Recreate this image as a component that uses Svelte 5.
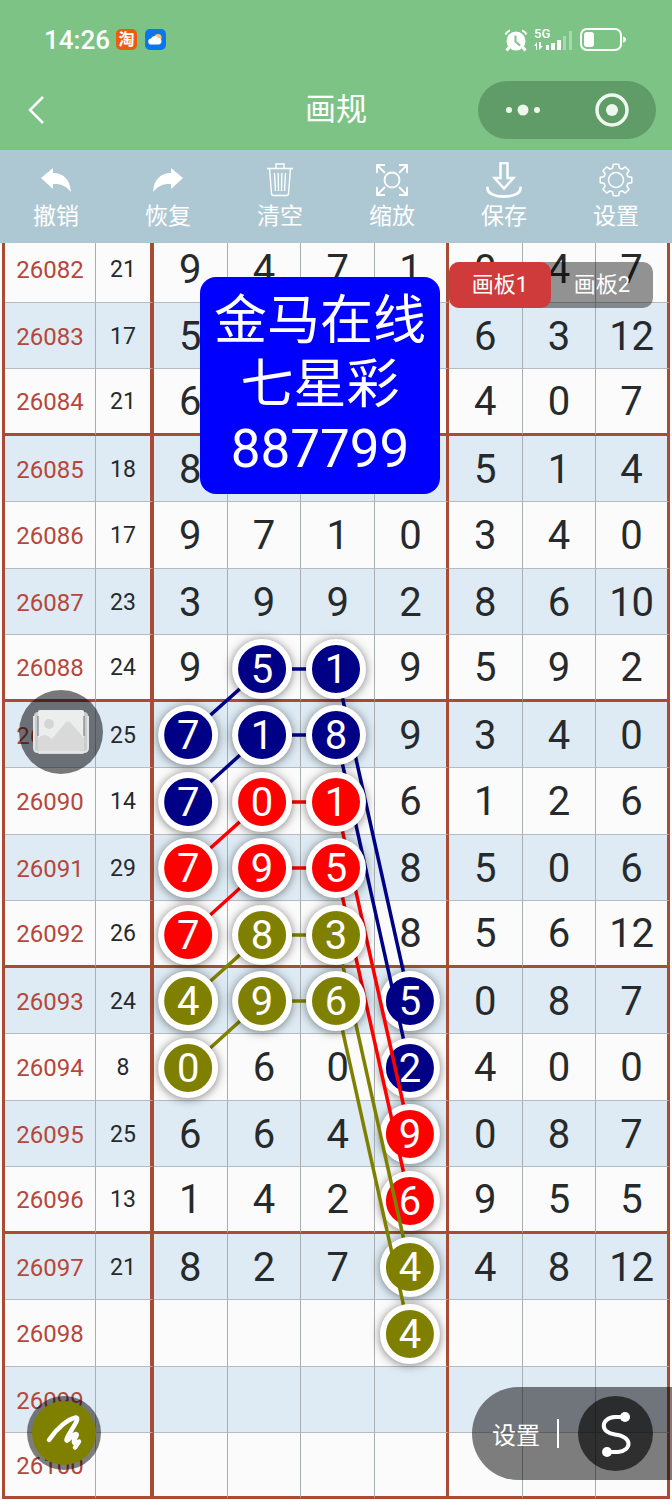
<script>
    const rows = [
        { id: '26082', sum: 21, nums: ['9', '4', '7', '1', '0', '4', '7'] },
        { id: '26083', sum: 17, nums: ['5', '', '', '', '6', '3', '12'] },
        { id: '26084', sum: 21, nums: ['6', '', '', '', '4', '0', '7'] },
        { id: '26085', sum: 18, nums: ['8', '', '', '', '5', '1', '4'] },
        { id: '26086', sum: 17, nums: ['9', '7', '1', '0', '3', '4', '0'] },
        { id: '26087', sum: 23, nums: ['3', '9', '9', '2', '8', '6', '10'] },
        { id: '26088', sum: 24, nums: ['9', '', '', '9', '5', '9', '2'] },
        { id: '26089', sum: 25, nums: ['', '', '', '9', '3', '4', '0'] },
        { id: '26090', sum: 14, nums: ['', '', '', '6', '1', '2', '6'] },
        { id: '26091', sum: 29, nums: ['', '', '', '8', '5', '0', '6'] },
        { id: '26092', sum: 26, nums: ['', '', '', '8', '5', '6', '12'] },
        { id: '26093', sum: 24, nums: ['', '', '', '', '0', '8', '7'] },
        { id: '26094', sum: 8, nums: ['', '6', '0', '', '4', '0', '0'] },
        { id: '26095', sum: 25, nums: ['6', '6', '4', '', '0', '8', '7'] },
        { id: '26096', sum: 13, nums: ['1', '4', '2', '', '9', '5', '5'] },
        { id: '26097', sum: 21, nums: ['8', '2', '7', '', '4', '8', '12'] },
        { id: '26098', sum: '', nums: ['', '', '', '', '', '', ''] },
        { id: '26099', sum: '', nums: ['', '', '', '', '', '', ''] },
        { id: '26100', sum: '', nums: ['', '', '', '', '', '', ''] }
    ];

    // each path: colour + four balls [column, row, digit], later paths lie on top
    const paths = [
        { color: '#000086', balls: [[0, 7, 7], [1, 6, 5], [2, 6, 1], [3, 11, 5]] },
        { color: '#000086', balls: [[0, 8, 7], [1, 7, 1], [2, 7, 8], [3, 12, 2]] },
        { color: '#fe0000', balls: [[0, 9, 7], [1, 8, 0], [2, 8, 1], [3, 13, 9]] },
        { color: '#fe0000', balls: [[0, 10, 7], [1, 9, 9], [2, 9, 5], [3, 14, 6]] },
        { color: '#808000', balls: [[0, 11, 4], [1, 10, 8], [2, 10, 3], [3, 15, 4]] },
        { color: '#808000', balls: [[0, 12, 0], [1, 11, 9], [2, 11, 6], [3, 16, 4]] }
    ];

    const px = col => `${28 + col * 11}%`;
    const py = row => Math.floor(27 + (row * 133) / 2);

    let board = $state(1);

    function gearPath(teeth, outer, inner) {
        const pts = [];
        const step = (Math.PI * 2) / teeth;
        for (let i = 0; i < teeth; i++) {
            const a = i * step - Math.PI / 2;
            for (const [r, d] of [[inner, -0.27], [outer, -0.17], [outer, 0.17], [inner, 0.27]]) {
                pts.push(`${(18 + r * Math.cos(a + d)).toFixed(2)} ${(18 + r * Math.sin(a + d)).toFixed(2)}`);
            }
        }
        return 'M' + pts.join('L') + 'Z';
    }
</script>

<div class="app">
    <header>
        <div class="status">
            <span class="clock">14:26</span>
            <span class="taobao">淘</span>
            <svg class="weather" width="21" height="21" viewBox="0 0 21 21">
                <rect width="21" height="21" rx="5" fill="#0b76ea" />
                <circle cx="13" cy="8.5" r="3.6" fill="#ffc46b" />
                <path d="M6.5 15.5a3 3 0 0 1-.4-6 4 4 0 0 1 7.2-.6 3.4 3.4 0 0 1 .9 6.6z" fill="#fff" />
            </svg>
            <span class="grow"></span>
            <svg width="24" height="24" viewBox="0 0 24 24">
                <circle cx="12" cy="13" r="9.5" fill="#fff" />
                <path d="M1.500 6.500A7 7 0 0 1 6 2.500M22.500 6.500A7 7 0 0 0 18 2.500" stroke="#fff" stroke-width="2" fill="none" />
                <path d="M5.500 19L2.500 22.500M18.500 19l3 3.500" stroke="#fff" stroke-width="3" />
                <path d="M11.500 7.500v6l4.500 4" stroke="#7cc385" stroke-width="2" fill="none" />
            </svg>
            <span class="signal">
                <span>5G</span>
                <svg width="40" height="22" viewBox="0 0 40 22" fill="#fff">
                    <path d="M0 17l3-4v8H2v-4zM5 13v8l4-4H7v-4z" />
                    <rect x="12" y="16" width="3" height="5" />
                    <rect x="17" y="14" width="4" height="7" />
                    <rect x="23" y="11" width="4" height="10" />
                    <rect x="29" y="7" width="3" height="14" opacity=".35" />
                    <rect x="35" y="2" width="3" height="19" opacity=".35" />
                </svg>
            </span>
            <svg width="46" height="24" viewBox="0 0 46 24">
                <rect x="1" y="1" width="40" height="21" rx="6" fill="none" stroke="#fff" stroke-width="2" />
                <rect x="4" y="4" width="10" height="15" rx="3" fill="#fff" />
                <path d="M43 8.500q3 .5 3 3t-3 3z" fill="#fff" />
            </svg>
        </div>
        <div class="nav">
            <button class="back" aria-label="返回">
                <svg width="20" height="30" viewBox="0 0 20 30">
                    <path d="M16 2L3 15l13 13" fill="none" stroke="#fff" stroke-width="2.500" />
                </svg>
            </button>
            <h1>画规</h1>
            <div class="capsule">
                <button aria-label="更多">
                    <svg width="36" height="12" viewBox="0 0 36 12" fill="#eef7ee">
                        <circle cx="4" cy="6" r="3" />
                        <circle cx="18" cy="6" r="5.500" />
                        <circle cx="32" cy="6" r="3" />
                    </svg>
                </button>
                <button aria-label="关闭">
                    <svg width="34" height="34" viewBox="0 0 34 34">
                        <circle cx="17" cy="17" r="15" fill="none" stroke="#eef7ee" stroke-width="3.500" />
                        <circle cx="17" cy="17" r="6" fill="#eef7ee" />
                    </svg>
                </button>
            </div>
        </div>
    </header>

    <div class="toolbar">
        <button>
            <svg viewBox="0 0 36 36">
                <path d="M3 16L15 6v5C25 11 32 17 33 30 28 24 23 21.500 15 22v5z" fill="#fff" />
            </svg>
            撤销
        </button>
        <button>
            <svg viewBox="0 0 36 36">
                <path d="M33 16L21 6v5C11 11 4 17 3 30 8 24 13 21.500 21 22v5z" fill="#fff" />
            </svg>
            恢复
        </button>
        <button>
            <svg viewBox="0 0 36 36" fill="none" stroke="#fff" stroke-width="1.400">
                <path d="M5 6.500h26M14 6V2h8v4M7.500 7l2 24.500q0 2 2 2h13q2 0 2-2l2-24.500M12.500 11l1 18M16.200 11l.3 18M19.800 11l-.3 18M23.500 11l-1 18" />
            </svg>
            清空
        </button>
        <button>
            <svg viewBox="0 0 36 36" fill="none" stroke="#fff" stroke-width="1.800">
                <circle cx="18" cy="18" r="7.500" />
                <path d="M3 11V3h8M3 3l8 8M25 3h8v8M33 3l-8 8M3 25v8h8M3 33l8-8M25 33h8v-8M33 33l-8-8" />
            </svg>
            缩放
        </button>
        <button>
            <svg viewBox="0 0 36 36" fill="none" stroke="#fff" stroke-width="2.400">
                <path d="M14.500 1h7v15h6L18 26.500 8.500 16h6z" />
                <path d="M1.500 26c0 5 6 8.500 16.500 8.500s16.500-3.500 16.500-8.500" stroke-width="2.800" stroke-linecap="round" />
            </svg>
            保存
        </button>
        <button>
            <svg viewBox="0 0 36 36" fill="none" stroke="#fff" stroke-width="1.500" stroke-linejoin="round">
                <path d={gearPath(8, 16, 12.5)} />
                <circle cx="18" cy="18" r="7.500" />
            </svg>
            设置
        </button>
    </div>

    <main>
        <table>
            <colgroup>
                <col class="c-id" />
                <col class="c-sum" />
                {#each rows[0].nums as _}<col />{/each}
            </colgroup>
            <tbody>
                {#each rows as row, i}
                    <tr class:mark={i % 4 === 2 || i === rows.length - 1}>
                        <th scope="row">{row.id}</th>
                        <td class="sum">{row.sum}</td>
                        {#each row.nums as n}<td>{n}</td>{/each}
                    </tr>
                {/each}
            </tbody>
        </table>

        <svg class="drawing">
            {#each paths as path}
                {#each path.balls.slice(1) as [col, row], i}
                    <line
                        x1={px(path.balls[i][0])}
                        y1={py(path.balls[i][1])}
                        x2={px(col)}
                        y2={py(row)}
                        stroke={path.color}
                        stroke-width="3.500"
                    />
                {/each}
                {#each path.balls as [col, row, digit]}
                    <circle class="ball" cx={px(col)} cy={py(row)} r="27" fill={path.color} />
                    <text x={px(col)} y={py(row)} dy="14">{digit}</text>
                {/each}
            {/each}
        </svg>

        <div class="banner">
            <div>金马在线</div>
            <div>七星彩</div>
            <div>887799</div>
        </div>

        <div class="boards">
            <button class:active={board === 1} onclick={() => (board = 1)}>画板1</button>
            <button class:active={board === 2} onclick={() => (board = 2)}>画板2</button>
        </div>

        <button class="photo" aria-label="图片">
            <svg width="56" height="46" viewBox="0 0 56 46">
                <rect x="1" y="3" width="54" height="40" rx="4" fill="#c9cdcf" />
                <rect x="5" y="1" width="46" height="44" rx="2" fill="#eceeee" />
                <path d="M5 29q5-5 10-2l4 3 14-17q2-1 4 0l14 16v14q0 2-2 2H7q-2 0-2-2z" fill="#d9d9d9" />
                <circle cx="16" cy="15" r="5" fill="#d4d6d6" />
                <path d="M5 7v20M51 7v20" stroke="#697075" stroke-width="1" />
                <path d="M1 7v32q0 4 4 4h46q4 0 4-4V7" fill="none" stroke="#e2e4e5" stroke-width="2" />
            </svg>
        </button>

        <button class="pen" aria-label="画笔">
            <svg width="64" height="64" viewBox="0 0 64 64">
                <path d="M17 39C25 27 36 18 44 16.500c5 1-8 16-9.500 22-.5 4 5-4 9-5.500 4 0-3 6-1.500 8.500 1 2 3 0 5-1l-4 6" fill="none" stroke="#fff" stroke-width="4.500" stroke-linecap="round" stroke-linejoin="round" />
            </svg>
        </button>

        <div class="panel">
            <button class="config">设置</button>
            <i></i>
            <button class="curve" aria-label="曲线">
                <svg width="40" height="50" viewBox="0 0 40 50">
                    <path d="M29 8H19C4 9 4 24 19 25.500c18 2 17 16 3 17.500H11" fill="none" stroke="#fff" stroke-width="4" />
                    <circle cx="29" cy="8" r="5" fill="#fff" />
                    <circle cx="11" cy="43" r="5" fill="#fff" />
                </svg>
            </button>
        </div>
    </main>
</div>

<style>
    :global(body) {
        margin: 0;
        background: #fbfbfb;
    }

    .app {
        font-family: Roboto, "Noto Sans CJK SC", sans-serif;
        color: #262a2c;
    }

    button {
        border: 0;
        padding: 0;
        background: none;
        color: #fff;
        font: inherit;
        cursor: pointer;
    }

    svg {
        display: block;
        flex: none;
    }

    header {
        background: #7cc385;
        color: #fff;
    }

    .status {
        display: flex;
        align-items: center;
        height: 77px;
        padding: 2px 46px 0 44px;
        box-sizing: border-box;
    }

    .clock {
        font-size: 26px;
        font-weight: 500;
    }

    .taobao {
        margin: 0 8px 0 6px;
        width: 21px;
        border-radius: 5px;
        background: #ee5a14;
        font-size: 16px;
        line-height: 21px;
        text-align: center;
        font-weight: 700;
    }

    .grow {
        flex: 1;
    }

    .signal {
        position: relative;
        margin: 0 6px;
    }

    .signal span {
        position: absolute;
        top: -2px;
        left: 0;
        font-size: 13px;
        line-height: 13px;
        font-weight: 500;
    }

    .nav {
        display: grid;
        grid-template-columns: 1fr auto 1fr;
        align-items: center;
        height: 73px;
        padding: 0 16px 8px;
        box-sizing: border-box;
    }

    .back {
        justify-self: start;
        padding-left: 11px;
    }

    h1 {
        margin: 0;
        font-size: 31px;
        line-height: 40px;
        font-weight: 400;
    }

    .capsule {
        justify-self: end;
        display: flex;
        width: 178px;
        height: 58px;
        border-radius: 29px;
        background: #609c67;
    }

    .capsule button {
        flex: 1;
        display: flex;
        align-items: center;
        justify-content: center;
    }

    .toolbar {
        position: relative;
        z-index: 1;
        display: flex;
        background: #aec8d3;
        padding: 12px 0 11px;
    }

    .toolbar button {
        flex: 1;
        display: flex;
        flex-direction: column;
        align-items: center;
        gap: 4px;
        font-size: 23px;
        line-height: 30px;
    }

    .toolbar svg {
        width: 36px;
        height: 36px;
    }

    main {
        position: relative;
        overflow: hidden;
    }

    table {
        table-layout: fixed;
        width: calc(100% - 4px);
        margin: -7px 2px 0;
        border-spacing: 0;
        border-left: 3px solid #a94c36;
        box-sizing: border-box;
    }

    .c-id {
        width: 91px;
    }

    .c-sum {
        width: 58px;
    }

    tr {
        height: 67px;
        background: #fbfbfb;
    }

    tr:nth-child(even) {
        height: 66px;
        background: #deebf4;
    }

    tr:last-child {
        height: 66px;
    }

    th,
    td {
        box-sizing: border-box;
        padding: 2px 0 0;
        border-right: 1px solid #a9aeb0;
        border-bottom: 1px solid #b4bcc0;
        text-align: center;
        font-size: 40px;
        line-height: 44px;
        font-weight: 400;
    }

    th {
        color: #b5473b;
        font-size: 24px;
    }

    .sum {
        font-size: 23px;
    }

    td:nth-child(2),
    td:nth-child(6),
    td:nth-child(9) {
        border-right: 3px solid #a94c36;
    }

    td:nth-child(2) {
        border-right-width: 4px;
    }

    .mark th,
    .mark td {
        border-bottom: 3px solid #a94c36;
    }

    .drawing {
        position: absolute;
        inset: 0;
        width: 100%;
        height: 100%;
        pointer-events: none;
    }

    .ball {
        stroke: #fff;
        stroke-width: 6px;
        filter: drop-shadow(0 1px 5px rgba(0, 0, 0, 0.5));
    }

    .drawing text {
        fill: #fff;
        font-size: 40px;
        text-anchor: middle;
    }

    .banner {
        position: absolute;
        top: 34px;
        left: 200px;
        width: 240px;
        padding: 12px 0 13px;
        border-radius: 16px;
        background: #0000fe;
        color: #fff;
        font-size: 53px;
        line-height: 64px;
        text-align: center;
    }

    .boards {
        position: absolute;
        top: 19px;
        right: 19px;
        display: flex;
        border-radius: 10px;
        background: rgba(0, 0, 0, 0.42);
    }

    .boards button {
        width: 102px;
        border-radius: 10px;
        font-size: 22px;
        line-height: 46px;
    }

    .boards .active {
        background: #cf3b3b;
    }

    .photo {
        position: absolute;
        top: 447px;
        left: 19px;
        display: grid;
        place-items: center;
        width: 84px;
        height: 84px;
        border-radius: 50%;
        background: rgba(0, 0, 0, 0.52);
    }

    .pen {
        position: absolute;
        bottom: 29px;
        left: 27px;
        display: grid;
        place-items: center;
        width: 74px;
        height: 74px;
        border-radius: 50%;
        background: rgba(0, 0, 0, 0.5);
    }

    .pen svg {
        border-radius: 50%;
        background: #808000;
    }

    .panel {
        position: absolute;
        right: 0;
        bottom: 19px;
        display: flex;
        align-items: center;
        height: 93px;
        padding: 0 19px 0 20px;
        border-radius: 47px 0 0 47px;
        background: rgba(0, 0, 0, 0.5);
    }

    .config {
        font-size: 24px;
    }

    .panel i {
        width: 2px;
        height: 29px;
        margin: 0 19px 0 17px;
        background: #fff;
    }

    .curve {
        display: grid;
        place-items: center;
        width: 75px;
        height: 75px;
        border-radius: 50%;
        background: rgba(0, 0, 0, 0.62);
    }
</style>
